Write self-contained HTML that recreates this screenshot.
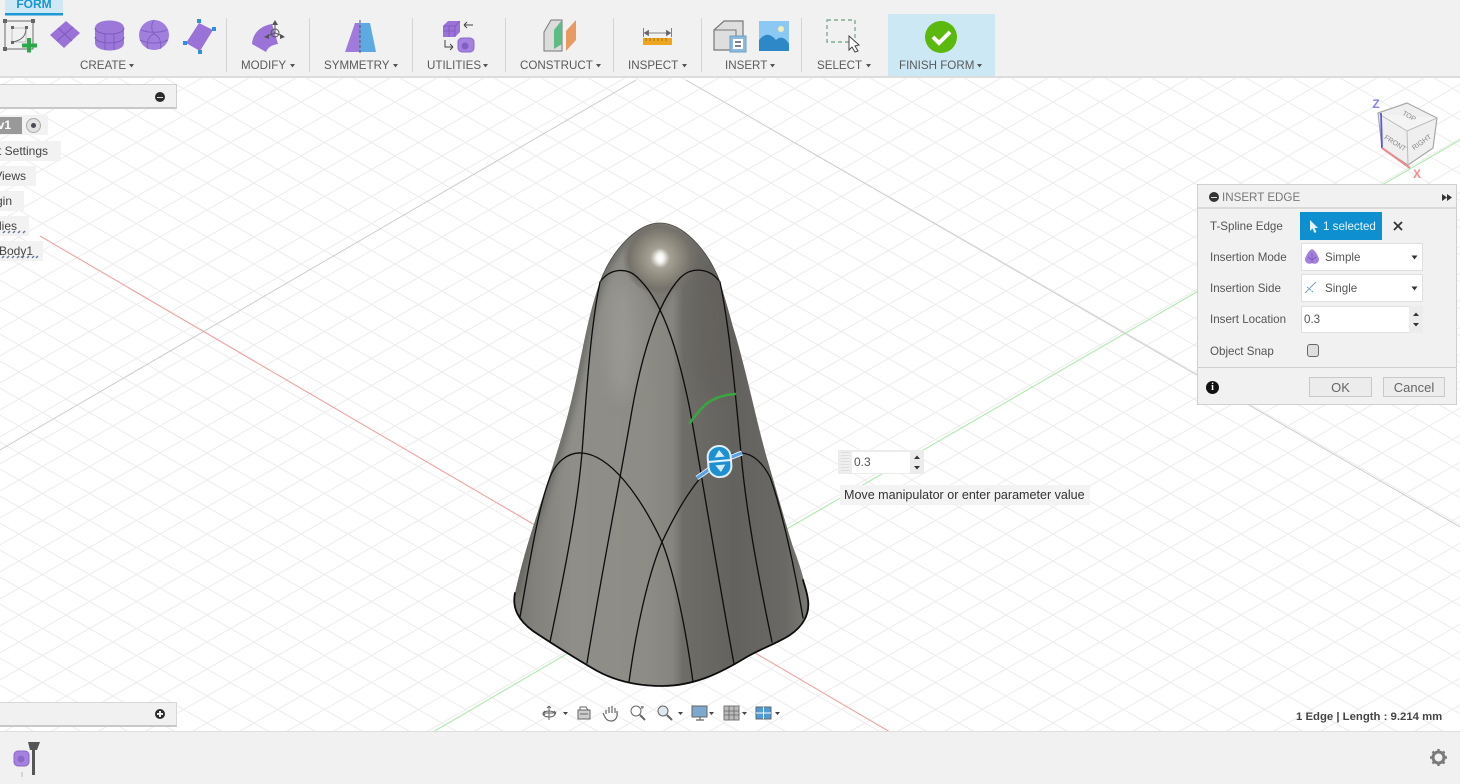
<!DOCTYPE html>
<html><head><meta charset="utf-8"><style>
*{box-sizing:border-box}
html,body{margin:0;padding:0;width:1460px;height:784px;overflow:hidden;background:#fff;font-family:"Liberation Sans",sans-serif}
.a{position:absolute}
.t{position:absolute;white-space:nowrap;font-size:11.6px;color:#5a5a5a;line-height:14px}
.sep{position:absolute;top:18px;width:1px;height:54px;background:#d4d4d4}
.row{position:absolute;left:0;height:20px;background:#f2f2f2;color:#444;font-size:12px;line-height:20px;display:flex;justify-content:flex-end;white-space:nowrap;overflow:hidden}
.lab{position:absolute;left:1210px;font-size:11.6px;color:#555;line-height:14px;white-space:nowrap}
.sel{position:absolute;left:1301px;width:122px;background:#fff;border:1px solid #dfdfdf;font-size:11.6px;color:#555}
.btn{position:absolute;top:377px;height:20px;background:#ececec;border:1px solid #c9c9c9;color:#666;text-align:center;font-size:13px;line-height:19px}
</style></head><body>
<svg class="a" style="left:0;top:0" width="1460" height="784" viewBox="0 0 1460 784" xmlns="http://www.w3.org/2000/svg">
<defs>
<pattern id="g" width="47" height="27" patternUnits="userSpaceOnUse" patternTransform="translate(19 21)">
<path d="M0 0L47 27M47 0L0 27" stroke="#ededed" stroke-width="1" fill="none"/>
</pattern>
<linearGradient id="sh" x1="514" x2="808" y1="0" y2="0" gradientUnits="userSpaceOnUse">
<stop offset="0" stop-color="#75746f"/><stop offset=".07" stop-color="#82817c"/><stop offset=".2" stop-color="#8f8e89"/><stop offset=".45" stop-color="#8d8c85"/><stop offset=".54" stop-color="#86857f"/><stop offset=".575" stop-color="#6f6d68"/><stop offset=".75" stop-color="#64625e"/><stop offset=".92" stop-color="#6a6864"/><stop offset="1" stop-color="#7a7873"/>
</linearGradient>
<radialGradient id="dome" cx="660" cy="258" r="38" gradientUnits="userSpaceOnUse">
<stop offset="0" stop-color="#fff"/><stop offset=".1" stop-color="#ecebe5"/><stop offset=".26" stop-color="#a5a195"/><stop offset=".55" stop-color="#8c887c"/><stop offset=".82" stop-color="#74716a"/><stop offset="1" stop-color="#74716a" stop-opacity="0"/>
</radialGradient>
<clipPath id="body"><path d="M660 223C637 223 612 250 600 282C588 315 583 350 575 385C565 432 548 480 533 527C525 552 519 575 515 593C512 608 518 620 533 631C548 641 570 655 592 668C615 682 640 686 662 686C695 686 722 672 745 658C760 649 778 643 790 635C802 627 810 615 808 600C806 585 800 565 793 547C783 515 775 485 766 455C755 415 745 365 733 327C729 312 725 298 720 282C708 250 683 223 660 223Z"/></clipPath>
<filter id="b2" x="-200%" y="-100%" width="500%" height="300%"><feGaussianBlur stdDeviation="2"/></filter>
<filter id="b3" x="-50%" y="-50%" width="200%" height="200%"><feGaussianBlur stdDeviation="3"/></filter>
<filter id="b8" x="-200%" y="-100%" width="500%" height="300%"><feGaussianBlur stdDeviation="8"/></filter>
<filter id="bs" x="-5%" y="-5%" width="110%" height="110%"><feGaussianBlur stdDeviation=".3"/></filter>
</defs>
<rect width="1460" height="784" fill="#fff"/>
<rect y="78" width="1460" height="654" fill="url(#g)"/>
<!-- axis lines -->
<path d="M0 450L636 80M686 80L1460 527" stroke="#cdcdcd" stroke-width="1" fill="none"/>
<path d="M40 236L540 528M750 650L890 732" stroke="#f0a3a3" stroke-width="1.1" fill="none"/>
<path d="M433 732L570 652M785 530L1200 290L1460 140" stroke="#afe8af" stroke-width="1.1" fill="none"/>
<!-- body -->
<g clip-path="url(#body)">
<rect x="500" y="210" width="320" height="490" fill="url(#sh)"/>
<ellipse cx="622" cy="340" rx="14" ry="60" fill="#a3a29e" opacity=".55" filter="url(#b8)"/>
<ellipse cx="712" cy="330" rx="22" ry="70" fill="#5e5c58" opacity=".35" filter="url(#b8)"/>
<path d="M660 223C637 223 612 250 600 282C588 315 583 350 575 385C565 432 548 480 533 527C525 552 519 575 515 593" fill="none" stroke="#5c5b56" stroke-width="10" opacity=".55" filter="url(#b3)"/>
<path d="M635 272L660 314L685 272Z" fill="#6f6d66" opacity=".55" filter="url(#b3)"/>
<ellipse cx="660" cy="258" rx="38" ry="36" fill="url(#dome)"/>
<ellipse cx="660.500" cy="258" rx="2.500" ry="7" fill="#fff" filter="url(#b2)" opacity=".95"/>
</g>
<!-- edge lines -->
<g fill="none" stroke="#0c0c0c" stroke-width="1.3" stroke-linecap="round" filter="url(#bs)">
<path d="M600 282C610 268 628 266 640 280C665 305 680 360 690 410C700 465 715 560 734 664"/>
<path d="M720 282C710 268 692 266 680 278C655 305 640 365 632 410C622 470 602 570 587 663"/>
<path d="M600 282C590 330 586 400 582 453C577 510 565 570 550 642"/>
<path d="M720 282C730 330 736 400 741 453C746 510 757 570 772 642"/>
<path d="M520 617C530 560 538 510 549 480C555 462 568 452 582 453C610 455 640 495 662 542C675 575 686 630 693 682"/>
<path d="M803 618C795 570 782 510 770 477C762 462 752 453 740 453C712 453 684 495 662 542C648 575 636 630 629 682"/>
<path d="M600 282C612 250 637 223 660 223C683 223 708 250 720 282" stroke="#4a4844" stroke-width=".8"/>
<path d="M515 593C512 608 518 620 533 631C548 641 570 655 592 668C615 682 640 686 662 686C695 686 722 672 745 658C760 649 778 643 790 635C802 627 810 615 808 600C807 592 805 587 803 580" stroke-width="1.800"/>
</g>
<path d="M690 423C695 415 700 410 705 405C712 399 722 395 735 394" fill="none" stroke="#3aa63f" stroke-width="2.600" stroke-linecap="round"/>
<!-- manipulator -->
<path d="M697 478L711 468M729 458L742 453" stroke="#dcecf8" stroke-width="5" fill="none"/>
<path d="M697 478L711 468M729 458L742 453" stroke="#5a9fe0" stroke-width="3" fill="none"/>
<g transform="rotate(-5 720 461)">
<rect x="708" y="446" width="23" height="31" rx="11" fill="#1e8fd0" stroke="#dff0fa" stroke-width="2"/>
<rect x="708" y="460" width="23" height="2" fill="#e8f5fc"/>
<path d="M720 450L725 457H715Z" fill="#d6ecf8"/><path d="M720 472L725 465H715Z" fill="#d6ecf8"/>
</g>
<!-- viewcube -->
<path d="M1378 113L1407 103L1437 118L1433 148L1408 165L1382 148Z" fill="#efefef" stroke="#a8a8a8" stroke-width="1.200" stroke-linejoin="round"/>
<path d="M1379 114L1407 131L1437 118" fill="#f4f4f4" stroke="#bbb" stroke-width="1"/>
<path d="M1407 131L1408 165" fill="none" stroke="#bbb" stroke-width="1"/>
<path d="M1381 113L1382 148" stroke="#5b5bd8" stroke-width="1.800"/>
<path d="M1382 148L1410 168" stroke="#e98a8a" stroke-width="2"/>
<text x="1376" y="108" font-size="12" font-weight="bold" font-family="Liberation Sans" fill="#8585e2" text-anchor="middle">Z</text>
<text x="1417" y="178" font-size="12" font-weight="bold" font-family="Liberation Sans" fill="#ee8f8f" text-anchor="middle">X</text>
<text transform="translate(1408 118) rotate(30)" font-size="7" font-family="Liberation Sans" fill="#888" text-anchor="middle">TOP</text>
<text transform="translate(1394 145) rotate(32)" font-size="7" font-family="Liberation Sans" fill="#888" text-anchor="middle">FRONT</text>
<text transform="translate(1423 144) rotate(-35)" font-size="7" font-family="Liberation Sans" fill="#888" text-anchor="middle">RIGHT</text>
<!-- toolbar base -->
<rect width="1460" height="76" fill="#f1f1f1"/>
<rect y="76" width="1460" height="2" fill="#dcdcdc"/>
<rect x="5" width="58" height="13" fill="#cfe8f5"/>
<rect x="5" y="13" width="58" height="2.500" fill="#1c98d4"/>
<rect x="888" y="14" width="107" height="62" fill="#cde8f5"/>
<!-- sketch icon -->
<g fill="none" stroke="#6b6b6b" stroke-width="1">
<rect x="5" y="21" width="28" height="28"/><rect x="12" y="28" width="14" height="14" stroke-width=".7" stroke="#aaa"/>
<path d="M13 42C22 40 26 36 26 28"/></g>
<g fill="#666"><rect x="3" y="19" width="4" height="4"/><rect x="31" y="19" width="4" height="4"/><rect x="3" y="47" width="4" height="4"/><rect x="11" y="26" width="3" height="3"/><rect x="25" y="26" width="3" height="3"/><rect x="11" y="41" width="3" height="3"/></g>
<path d="M27 38h4v5.500h6v4h-6v5h-4v-5h-5v-4h5z" fill="#2aa84a"/>
<!-- plane -->
<path d="M50 35L66 21L80 33L64 48Z" fill="#9a72d8"/><path d="M58 28L72 41M73 27L57 41" stroke="#7f58c0" stroke-width="1"/>
<!-- box/cylinder -->
<path d="M95 28C95 18 124 18 124 28V43C124 53 95 53 95 43Z" fill="#9c78d8"/>
<path d="M95 28C95 36 124 36 124 28M95 37C95 45 124 45 124 37M105 33V50M114 33V50" fill="none" stroke="#7f5cc0" stroke-width="1"/>
<!-- sphere -->
<circle cx="154" cy="35" r="15" fill="#a080dc"/>
<path d="M141 30C148 33 160 33 167 30M140 40C148 44 160 44 168 40M154 34C148 36 146 44 148 49M154 34C160 36 162 44 160 49M154 20C151 24 151 30 154 34" fill="none" stroke="#8060c4" stroke-width="1"/>
<!-- quadball -->
<path d="M199 23L213 30L200 51L186 43Z" fill="#9a72d8"/>
<g fill="#2f8fdc"><rect x="197" y="19" width="4" height="4"/><rect x="212" y="27" width="4" height="4"/><rect x="198" y="50" width="4" height="4"/><rect x="183" y="41" width="4" height="4"/></g>
<!-- modify -->
<path d="M252 44C253 33 260 26 272 24L278 44C272 45 268 47 266 52Z" fill="#9a72d8"/>
<g fill="none" stroke="#555" stroke-width="1"><circle cx="275" cy="33" r="4"/><path d="M275 24V33L267 36M275 33L283 36"/></g>
<path d="M275 20l3 5h-6zM264 37l5-3v5zM285 37l-5-3v5z" fill="#555"/>
<!-- symmetry -->
<path d="M345 52L355 23H360V52Z" fill="#a07bdc"/><path d="M360 23H370L376 52H360Z" fill="#5ea9e2"/>
<path d="M360 20V53" stroke="#555" stroke-dasharray="3 2"/>
<!-- utilities -->
<path d="M443 26L448 21H460V32L455 37H443Z" fill="#9a72d8"/><path d="M443 26H455V37M455 26L460 21M449 26V37M443 31H455" fill="none" stroke="#7c58bd" stroke-width=".8"/>
<path d="M473 25H464M464 25l3-3M464 25l3 3" stroke="#444" stroke-width="1" fill="none"/>
<path d="M445 40V47H453M453 47l-3-3M453 47l-3 3" stroke="#444" stroke-width="1" fill="none"/>
<rect x="458" y="38" width="16" height="14" rx="4" fill="#a682e0" stroke="#8a68c8"/><circle cx="465" cy="46" r="3.500" fill="#8060c0"/>
<!-- construct -->
<path d="M544 51V32L551 20H562V51Z" fill="#dcdcdc" stroke="#777" stroke-width="1"/>
<path d="M554 49V30L562 20V44Z" fill="#5cbc84"/>
<path d="M566 51V31L576 20V40Z" fill="#e89a60"/>
<!-- inspect -->
<path d="M644 33H671M644.500 33l4-2.500v5zM670.500 33l-4-2.500v5zM643.500 28V37M671.500 28V37" stroke="#666" fill="#666" stroke-width=".8"/>
<rect x="643" y="38" width="29" height="7" fill="#eea61f"/>
<path d="M646 38v3M650 38v3M654 38v3M658 38v3M662 38v3M666 38v3" stroke="#a8741a" stroke-width="1"/>
<!-- insert -->
<path d="M714 50V30L724 21H743V42H735V50Z" fill="#dedede" stroke="#777" stroke-width="1.200"/>
<path d="M714 30H736V42" fill="none" stroke="#777" stroke-width="1"/>
<rect x="730" y="36" width="16" height="16" fill="#8fb9d8" stroke="#6ba0c8"/><rect x="733" y="39" width="10" height="10" fill="#fff"/>
<path d="M735 42h6M735 46h6" stroke="#557" stroke-width="1.500"/>
<rect x="759" y="21" width="30" height="30" fill="#8cc8f4"/>
<path d="M759 51V40C765 33 770 33 776 40C780 36 785 37 789 44V51Z" fill="#2e88c8"/>
<circle cx="781" cy="29" r="3" fill="#f3eeb4"/>
<!-- select -->
<rect x="827" y="20" width="28" height="22" fill="none" stroke="#7dad93" stroke-width="1.400" stroke-dasharray="4 3"/>
<path d="M849 36V50L852 47L855 52L858 51L855 46L859 45Z" fill="#fff" stroke="#444" stroke-width="1"/>
<!-- finish -->
<circle cx="941" cy="37" r="16" fill="#5bb80c"/>
<path d="M933 37L939 43L950 32" fill="none" stroke="#fff" stroke-width="4"/>
<!-- carets -->
<g fill="#555">
<path d="M129 64h5l-2.500 3.500zM290 64h5l-2.500 3.500zM393 64h5l-2.500 3.500zM483 64h5l-2.500 3.500zM596 64h5l-2.500 3.500zM682 64h5l-2.500 3.500zM770 64h5l-2.500 3.500zM866 64h5l-2.500 3.500zM977 64h5l-2.500 3.500z"/>
</g>
<!-- nav bar icons -->
<g fill="none" stroke="#666" stroke-width="1">
<path d="M549 706V720M543 713H556M549 706l-2 2M549 706l2 2M543 713l2-2M543 713l2 2M556 713l-2-2M556 713l-2 2"/><ellipse cx="549" cy="714" rx="6" ry="3"/>
<rect x="578" y="710" width="12" height="9" fill="#ccc"/><path d="M580 710v-3h6l2 3M580 714h8"/>
<path d="M606 714V710M609 713V707M612 713V706M615 713V708M617 714V711C618 718 615 721 611 721C607 721 605 718 603 713" stroke-width="1.200"/>
<circle cx="636" cy="711" r="5"/><path d="M640 715L645 720" stroke-width="2"/><path d="M642 706v3M641 707h3"/>
<circle cx="663" cy="711" r="5" fill="#dfe8ee"/><path d="M667 715L672 720" stroke-width="2"/>
</g>
<path d="M563 712h5l-2.500 3zM678 712h5l-2.500 3zM709 712h5l-2.500 3zM742 712h5l-2.500 3zM775 712h5l-2.500 3z" fill="#444"/>
<rect x="692" y="706" width="15" height="11" fill="#7ea9cf" stroke="#666"/><path d="M700 717v3M696 720h8" stroke="#666" stroke-width="1.200"/>
<rect x="724" y="706" width="15" height="14" fill="#bbb" stroke="#777"/><path d="M729 706v14M734 706v14M724 711h15M724 715h15" stroke="#666" stroke-width=".8"/>
<rect x="756" y="707" width="15" height="12" fill="#4f9bd8" stroke="#666"/><path d="M763.500 707v12M756 713h15" stroke="#fff" stroke-width="1"/>
<!-- bottom bar -->
<rect y="732" width="1460" height="52" fill="#f1f1f1"/><rect y="731" width="1460" height="1" fill="#dedede"/>
<rect x="14" y="751" width="15" height="15" rx="4" fill="#a682e0" stroke="#8a68c8"/><circle cx="21" cy="759" r="3.500" fill="#8a6ac8"/>
<path d="M22 772v5" stroke="#bbb"/>
<path d="M28 742H40L37 750H35V775H32V750H30Z" fill="#555"/>
<g transform="translate(1438.500 757.500)"><circle r="5.500" fill="none" stroke="#7a7a7a" stroke-width="3"/><path d="M0-8.500V-5.500M0 5.500V8.500M-8.500 0H-5.500M5.500 0H8.500M-6-6L-4-4M4 4L6 6M-6 6L-4 4M4-4L6-6" stroke="#7a7a7a" stroke-width="2.400"/></g>
</svg>

<div class="t" style="left:34px;top:-3px;transform:translateX(-50%);font-weight:bold;color:#1696d2;font-size:12px">FORM</div>
<div class="sep" style="left:226px"></div><div class="sep" style="left:309px"></div><div class="sep" style="left:412px"></div><div class="sep" style="left:505px"></div><div class="sep" style="left:613px"></div><div class="sep" style="left:701px"></div><div class="sep" style="left:801px"></div>
<div class="t" style="left:80px;top:59px">CREATE</div>
<div class="t" style="left:241px;top:59px">MODIFY</div>
<div class="t" style="left:324px;top:59px">SYMMETRY</div>
<div class="t" style="left:427px;top:59px">UTILITIES</div>
<div class="t" style="left:520px;top:59px">CONSTRUCT</div>
<div class="t" style="left:628px;top:59px">INSPECT</div>
<div class="t" style="left:725px;top:59px">INSERT</div>
<div class="t" style="left:817px;top:59px">SELECT</div>
<div class="t" style="left:899px;top:59px">FINISH FORM</div>

<!-- browser -->
<div class="a" style="left:-2px;top:84px;width:179px;height:25px;background:#f1f1f1;border:1px solid #d0d0d0;border-bottom:2px solid #c8c8c8"></div>
<div class="a" style="left:155px;top:92px;width:10px;height:10px;border-radius:50%;background:#2b2b2b"></div><div class="a" style="left:157px;top:96.500px;width:6px;height:1.500px;background:#ddd"></div>
<div class="a" style="left:0;top:115px;width:48px;height:20px;background:#f2f2f2"></div>
<div class="a" style="left:0;top:117px;width:22px;height:17px;background:#999;color:#fff;font-weight:bold;font-size:12px;line-height:17px;display:flex;justify-content:flex-end;padding-right:11px;overflow:hidden;white-space:nowrap">v1</div>
<div class="a" style="left:26px;top:118px;width:15px;height:15px;border-radius:50%;background:#e2e2e2;border:1px solid #aaa"></div><div class="a" style="left:31px;top:123px;width:5px;height:5px;border-radius:50%;background:#4a4a55"></div>
<div class="row" style="top:141px;width:61px;padding-right:13px"><span style="flex:none">Document Settings</span></div>
<div class="row" style="top:166px;width:36px;padding-right:10px"><span style="flex:none">Named Views</span></div>
<div class="row" style="top:191px;width:24px;padding-right:12px"><span style="flex:none">Origin</span></div>
<div class="row" style="top:216px;width:29px;padding-right:12px"><span style="flex:none">Bodies</span></div>
<div class="row" style="top:241px;width:43px;padding-right:10px"><span style="flex:none">Body1</span></div>
<svg class="a" style="left:0;top:226px" width="45" height="36"><path d="M3 7l2-2M8 7l2-2M13 7l2-2M18 7l2-2M23 7l2-2" stroke="#67779a" stroke-width="1.500"/><path d="M2 32l2-2M7 32l2-2M12 32l2-2M17 32l2-2M22 32l2-2M27 32l2-2M32 32l2-2M36 32l2-2" stroke="#67779a" stroke-width="1.500"/></svg>
<!-- comments -->
<div class="a" style="left:-2px;top:702px;width:179px;height:25px;background:#f1f1f1;border:1px solid #d8d8d8;border-bottom:2px solid #c8c8c8"></div>
<div class="a" style="left:155px;top:709px;width:10px;height:10px;border-radius:50%;background:#2b2b2b"></div><div class="a" style="left:157px;top:713.300px;width:6px;height:1.500px;background:#eee"></div><div class="a" style="left:159.300px;top:711px;width:1.500px;height:6px;background:#eee"></div>

<!-- float -->
<div class="a" style="left:838px;top:450px;width:86px;height:24px;background:#ececec"></div>
<div class="a" style="left:841px;top:452px;width:8px;height:20px;background:repeating-linear-gradient(#ddd 0 1px,#efefef 1px 3px)"></div>
<div class="a" style="left:852px;top:452px;width:58px;height:21px;background:#fff;color:#555;font-size:12px;line-height:21px;padding-left:2px">0.3</div>
<svg class="a" style="left:912px;top:453px" width="10" height="19"><path d="M2 6h6L5 2.500zM2 13h6L5 16.500z" fill="#333"/></svg>
<div class="a" style="left:840px;top:485px;width:250px;height:20px;background:#f3f3f3;color:#333;font-size:12.550px;line-height:20px;padding-left:4px;white-space:nowrap">Move manipulator or enter parameter value</div>

<!-- dialog -->
<div class="a" style="left:1197px;top:184px;width:260px;height:221px;background:#f1f1f1;border:1px solid #cfcfcf"></div>
<div class="a" style="left:1198px;top:207px;width:258px;height:2px;background:#dadada"></div>
<div class="a" style="left:1198px;top:367px;width:258px;height:1px;background:#cfcfcf"></div>
<div class="a" style="left:1209px;top:192px;width:10px;height:10px;border-radius:50%;background:#333"></div><div class="a" style="left:1211px;top:196.500px;width:6px;height:1.500px;background:#ddd"></div>
<div class="t" style="left:1222px;top:191px;color:#777">INSERT EDGE</div>
<svg class="a" style="left:1441px;top:193px" width="12" height="9"><path d="M1 1l5 3.500L1 8zM6 1l5 3.500L6 8z" fill="#333"/></svg>
<div class="lab" style="top:220px">T-Spline Edge</div>
<div class="lab" style="top:251px">Insertion Mode</div>
<div class="lab" style="top:282px">Insertion Side</div>
<div class="lab" style="top:313px">Insert Location</div>
<div class="lab" style="top:345px">Object Snap</div>
<div class="a" style="left:1300px;top:212px;width:82px;height:28px;background:#0e8fd0;color:#e8f5fc;font-size:11.600px;line-height:29px;padding-left:23px;white-space:nowrap">1 selected</div>
<svg class="a" style="left:1308px;top:219px" width="12" height="15"><path d="M2 1V12L4.500 9.500L6.500 14L8.500 13L6.500 9H10Z" fill="#e5f2fa"/></svg>
<svg class="a" style="left:1392px;top:220px" width="12" height="12"><path d="M2 2L10 10M10 2L2 10" stroke="#333" stroke-width="1.800"/></svg>
<div class="sel" style="top:243px;height:28px;line-height:27px;padding-left:23px">Simple</div>
<svg class="a" style="left:1304px;top:248px" width="18" height="18"><path d="M8 1C4 3 2 8 1 11C1 15 5 17 8 15C11 17 15 15 15 11C14 8 12 3 8 1Z" fill="#a57fdc"/><path d="M8 5V15M4 9L8 12L12 9" stroke="#7c58bd" fill="none" stroke-width=".8"/></svg>
<svg class="a" style="left:1410px;top:254px" width="10" height="7"><path d="M1.500 1.500h6L4.500 5.500z" fill="#333"/></svg>
<div class="sel" style="top:274px;height:28px;line-height:27px;padding-left:23px">Single</div>
<svg class="a" style="left:1304px;top:280px" width="16" height="16"><path d="M1 13L12 2" stroke="#8a9ab0" stroke-width="1"/><path d="M3 7l6 5" stroke="#57a0dc" stroke-width="1" stroke-dasharray="2 1"/></svg>
<svg class="a" style="left:1410px;top:285px" width="10" height="7"><path d="M1.500 1.500h6L4.500 5.500z" fill="#333"/></svg>
<div class="a" style="left:1301px;top:306px;width:122px;height:27px;background:#fff;border:1px solid #dfdfdf;color:#555;font-size:11.600px;line-height:25px;padding-left:2px">0.3</div>
<div class="a" style="left:1409px;top:306px;width:14px;height:27px;background:#ececec"></div>
<svg class="a" style="left:1410px;top:308px" width="12" height="23"><path d="M3 8h6L6 4.500zM3 15h6L6 18.500z" fill="#333"/></svg>
<div class="a" style="left:1307px;top:344px;width:12px;height:13px;background:#dedede;border:1.500px solid #666;border-radius:3px"></div>
<div class="a" style="left:1206px;top:381px;width:13px;height:13px;border-radius:50%;background:#111;color:#fff;font:bold 10px/13px 'Liberation Serif',serif;text-align:center">i</div>
<div class="btn" style="left:1309px;width:63px">OK</div>
<div class="btn" style="left:1383px;width:62px">Cancel</div>

<div class="t" style="left:1296px;top:710px;font-size:11.350px;font-weight:bold;color:#444">1 Edge | Length : 9.214 mm</div>
</body></html>
